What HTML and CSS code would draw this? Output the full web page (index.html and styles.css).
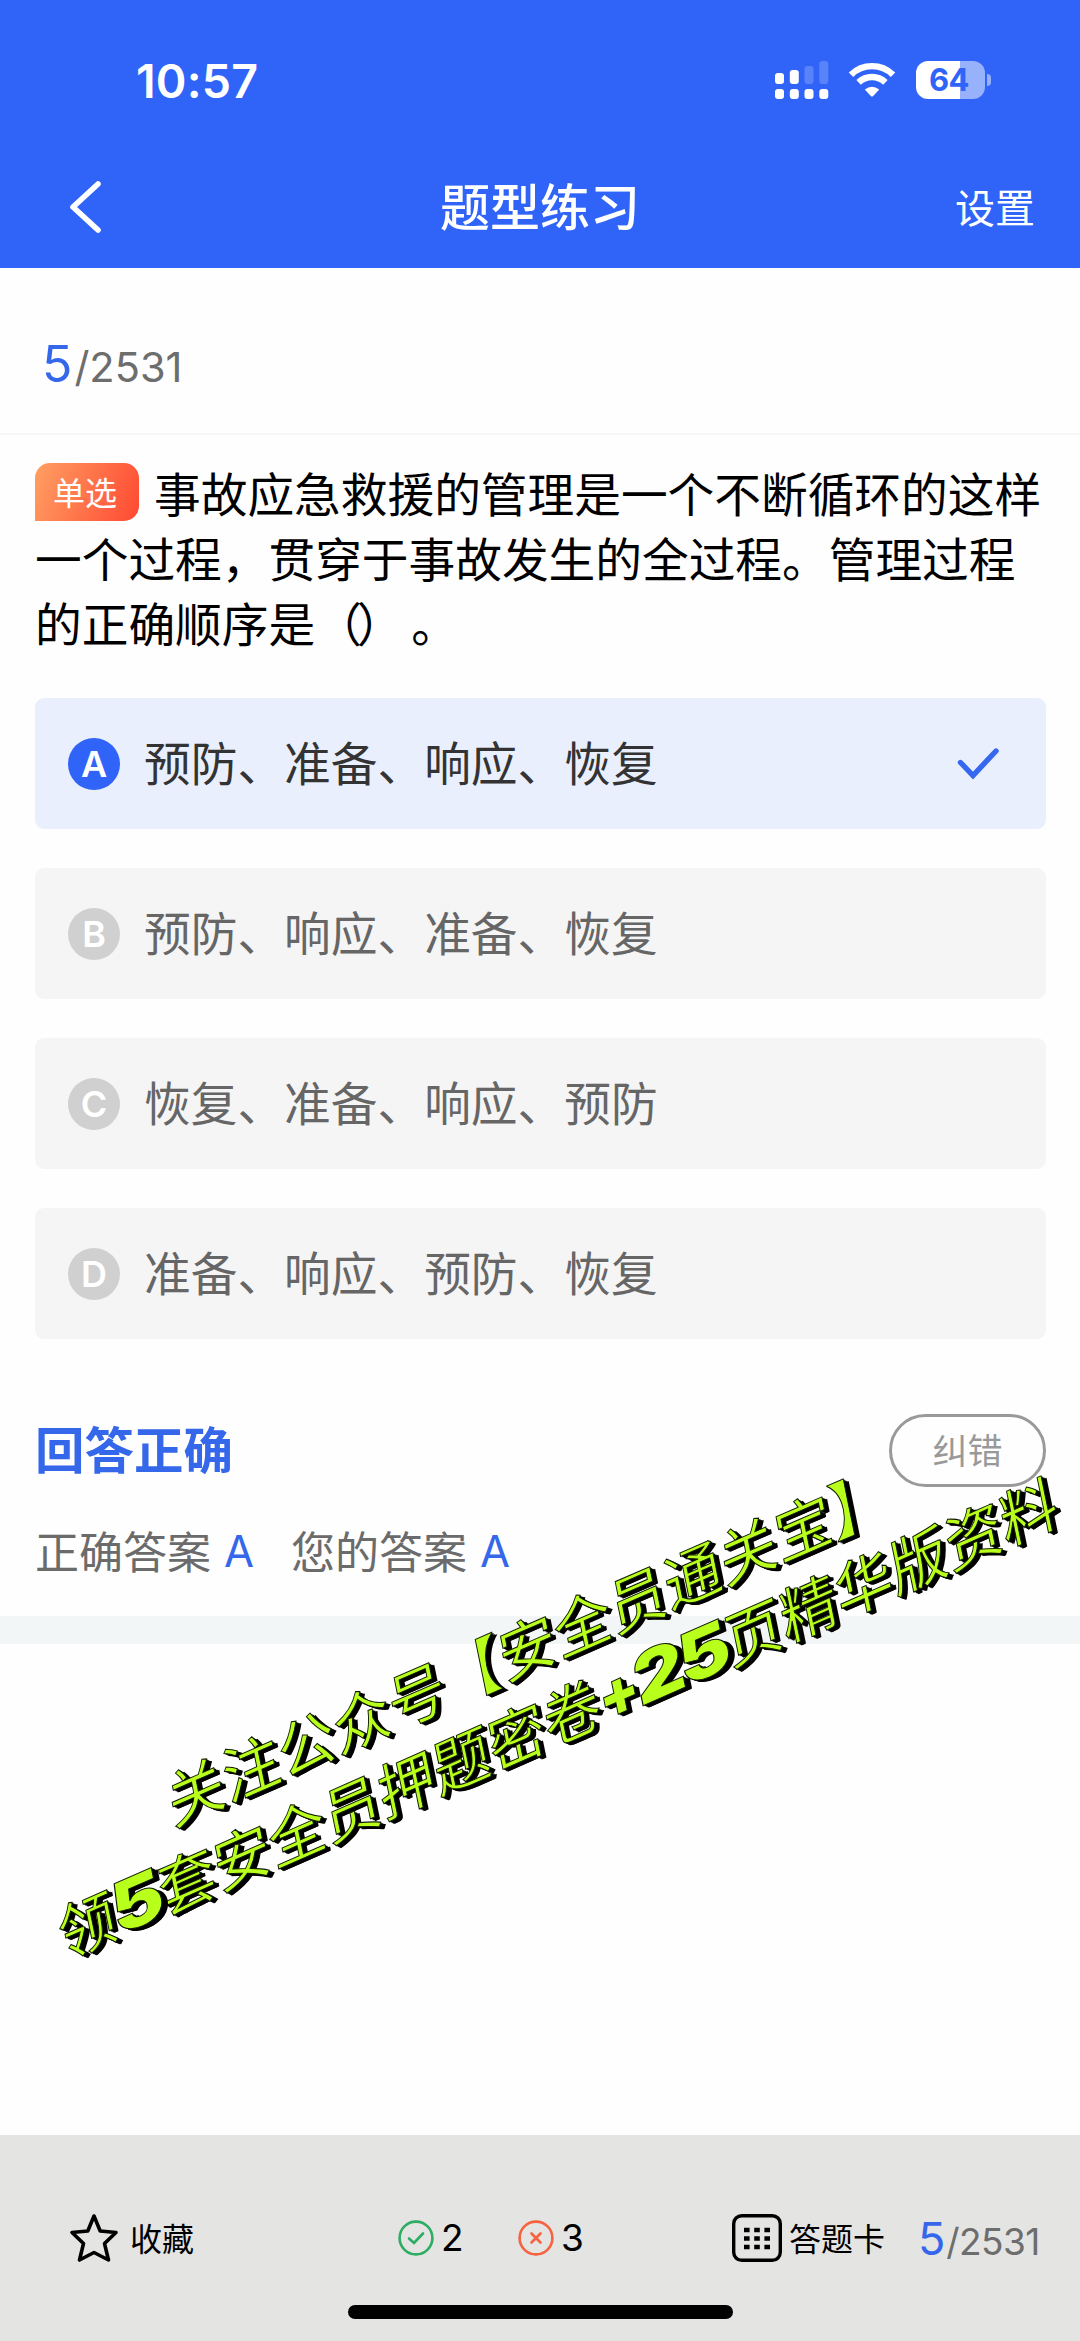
FILE: index.html
```html
<!DOCTYPE html>
<html lang="zh-CN">
<head>
<meta charset="utf-8">
<title>题型练习</title>
<link rel="stylesheet" href="styles.css">
</head>
<body>
<div class="screen">
  <header class="header">
    <div class="status">
      <span class="clock">10:57</span>
      <div class="status-icons">
        <svg class="signal" width="54" height="38" viewBox="0 0 54 38" fill="#fff">
          <rect x="0" y="12" width="9" height="11" rx="3"/><rect x="14.8" y="9" width="9" height="14" rx="3"/>
          <rect x="29.5" y="5" width="9" height="18" rx="3" opacity=".2"/><rect x="44.3" y="0" width="9" height="23" rx="3" opacity=".2"/>
          <rect x="0" y="28" width="9" height="10" rx="3"/><rect x="14.8" y="28" width="9" height="10" rx="3"/>
          <rect x="29.5" y="28" width="9" height="10" rx="3"/><rect x="44.3" y="28" width="9" height="10" rx="3"/>
        </svg>
        <svg class="wifi" width="48" height="36" viewBox="0 0 48 36">
          <g fill="none" stroke="#fff" stroke-width="6.4">
            <path d="M3 12.7A30 30 0 0 1 45 12.7"/><path d="M10.6 20.4A19.3 19.3 0 0 1 37.4 20.4"/>
          </g>
          <path d="M16.8 27.6Q24 22 31.2 27.6L25.2 34Q24 35 22.8 34Z" fill="#fff"/>
        </svg>
        <div class="battery"><span class="battery-level">64</span><i class="battery-tip"></i></div>
      </div>
    </div>
    <nav class="nav">
      <svg class="back" width="32" height="54" viewBox="0 0 32 54"><path d="M29 4L4 27L29 50" fill="none" stroke="#fff" stroke-width="5.600" stroke-linecap="round" stroke-linejoin="round"/></svg>
      <h1 class="title">题型练习</h1>
      <span class="settings">设置</span>
    </nav>
  </header>

  <div class="progress"><span class="counter"><b>5</b>/2531</span></div>

  <main class="content">
    <div class="question"><span class="tag">单选</span>事故应急救援的管理是一个不断循环的这样一个过程，贯穿于事故发生的全过程。管理过程的正确顺序是<span class="parens">（）</span>。</div>
    <div class="options">
      <div class="option selected"><span class="letter">A</span><span class="text">预防、准备、响应、恢复</span>
        <svg class="tick" width="46" height="34" viewBox="0 0 46 34"><path d="M4.500 15.500L17 28.500L40 4" fill="none" stroke="#3567ef" stroke-width="5.400" stroke-linecap="round" stroke-linejoin="miter"/></svg>
      </div>
      <div class="option"><span class="letter">B</span><span class="text">预防、响应、准备、恢复</span></div>
      <div class="option"><span class="letter">C</span><span class="text">恢复、准备、响应、预防</span></div>
      <div class="option"><span class="letter">D</span><span class="text">准备、响应、预防、恢复</span></div>
    </div>
    <div class="result">
      <span class="verdict">回答正确</span>
      <span class="report">纠错</span>
    </div>
    <div class="answers">
      <span>正确答案</span><b class="first">A</b><span class="yours">您的答案</span><b>A</b>
    </div>
  </main>
  <div class="divider"></div>

  <footer class="footer">
    <div class="toolbar">
      <div class="favorite">
        <svg width="50" height="50" viewBox="0 0 50 50"><path d="M25 3L31.200 18L47 19.500L35.500 30.500L39.500 47L25 39.500L10.500 47L14.500 30.500L3 19.500L18.800 18Z" fill="none" stroke="#000" stroke-width="3.600" stroke-linejoin="round"/></svg>
        <span>收藏</span>
      </div>
      <div class="score right">
        <svg width="36" height="36" viewBox="0 0 36 36" fill="none" stroke="#2fac63" stroke-width="2.600"><circle cx="18" cy="18" r="16.400"/><path d="M11 18.500L16 23L25 13.500" stroke-linecap="round"/></svg>
        <span>2</span>
      </div>
      <div class="score wrong">
        <svg width="36" height="36" viewBox="0 0 36 36" fill="none" stroke="#f7623f" stroke-width="2.600"><circle cx="18" cy="18" r="16.400"/><path d="M13.500 13.500L22.500 22.500M22.500 13.500L13.500 22.500" stroke-linecap="round"/></svg>
        <span>3</span>
      </div>
      <div class="sheet">
        <svg width="50" height="48" viewBox="0 0 50 48"><rect x="1.700" y="1.700" width="46.600" height="44.600" rx="8" fill="none" stroke="#000" stroke-width="3.400"/><path d="M12 16h26M12 24.500h26M12 33h26" stroke="#000" stroke-width="4.400" stroke-dasharray="5.600 4.600"/></svg>
        <span>答题卡</span>
      </div>
      <span class="counter small"><b>5</b>/2531</span>
    </div>
    <i class="home-bar"></i>
  </footer>

  <div class="promo promo-top">关注公众号【安全员通关宝】</div>
  <div class="promo promo-bottom">领<span class="num">5</span>套安全员押题密卷<span class="num plus">+</span><span class="num">2</span><span class="num">5</span>页精华版资料</div>
</div>
</body>
</html>
```
FILE: styles.css
```css
* { box-sizing: border-box; }
body { margin: 0; background: #fefefe; }
.screen {
  position: relative;
  display: flex;
  flex-direction: column;
  width: 1080px;
  height: 2341px;
  overflow: hidden;
  font-family: "Noto Sans CJK SC", sans-serif;
  text-spacing-trim: space-all;
  color: #000;
  background: #fefefe;
}
i, b { font-style: normal; font-weight: 400; }
svg { display: block; flex: none; }

.header { height: 268px; background: #3064f8; color: #fff; }
.status {
  display: flex;
  justify-content: space-between;
  align-items: center;
  height: 160px;
  padding: 0 89px 0 136px;
}
.clock { padding-top: 2px; font: 600 46.500px/60px Inter, sans-serif; letter-spacing: .2px; }
.status-icons { display: flex; align-items: center; }
.wifi { margin-left: 19px; }
.battery {
  position: relative;
  width: 69px;
  height: 38px;
  margin-left: 20px;
  margin-right: 6px;
  border-radius: 12px;
  background: linear-gradient(90deg, #fff 44px, #98b1fb 44px);
}
.battery-level {
  display: block;
  color: #3064f8;
  font: 700 31px/38px Inter, sans-serif;
  letter-spacing: -.5px;
  text-align: center;
  padding-right: 3px;
}
.battery-tip {
  position: absolute;
  left: 71px;
  top: 13px;
  width: 4px;
  height: 12px;
  border-radius: 0 4px 4px 0;
  background: #98b1fb;
}
.nav {
  display: grid;
  grid-template-columns: 1fr auto 1fr;
  align-items: center;
  height: 94px;
  padding: 0 45px 0 69px;
}
.title { margin: 0; padding: 0 24px 7px 0; font-size: 50px; line-height: 70px; font-weight: 500; }
.settings { justify-self: end; padding-bottom: 2px; font-size: 40px; line-height: 56px; }

.progress {
  display: flex;
  align-items: flex-end;
  height: 167px;
  padding: 0 42px 36px;
  border-bottom: 2px solid #f6f6f6;
}
.counter { font: 400 41.500px/60px Inter, sans-serif; color: #6d6d6d; letter-spacing: 0; white-space: nowrap; }
.counter b { font-size: 50px; letter-spacing: 2px; color: #3567ea; }

.content { padding: 24px 34px 0 35px; height: 1181px; }
.question { margin: 0; font-size: 46.700px; line-height: 65px; height: 239px; }
.parens { display: inline-block; width: 96px; letter-spacing: -5px; }
.tag {
  float: left;
  width: 104px;
  height: 58px;
  margin: 4px 15px 0 0;
  padding-right: 4px;
  border-radius: 15px 15px 15px 0;
  background: linear-gradient(110deg, #ff9f63, #ff4932);
  color: #fff;
  font-size: 32px;
  line-height: 56px;
  text-align: center;
}
.options { display: flex; flex-direction: column; gap: 39px; }
.option {
  display: flex;
  align-items: center;
  height: 131px;
  padding: 0 44px 0 33px;
  border-radius: 9px;
  background: #f5f5f5;
  color: #666;
  font-size: 46.700px;
  line-height: 66px;
}
.text { padding-bottom: 5px; }
.option.selected { background: #eaeffe; color: #333; }
.letter {
  width: 52px;
  height: 52px;
  margin-right: 24px;
  border-radius: 50%;
  background: #d0d0d0;
  color: #fff;
  font: 600 36px/53px Inter, sans-serif;
  text-align: center;
}
.selected .letter { background: #3064f8; }
.tick { margin-left: auto; }
.result { display: flex; justify-content: space-between; align-items: center; height: 73px; margin-top: 75px; }
.verdict { padding-bottom: 6px; color: #3567ea; font-size: 49.500px; font-weight: 700; line-height: 70px; }
.report {
  width: 157px;
  height: 73px;
  border: 3px solid #999;
  border-radius: 37px;
  color: #999;
  font-size: 35px;
  line-height: 63px;
  text-align: center;
}
.answers { display: flex; align-items: center; margin-top: 29px; color: #6b6b6b; font-size: 44px; line-height: 64px; }
.answers b { margin-left: 13px; padding-top: 3px; color: #3567ea; font: 400 43.500px/64px Inter, sans-serif; }
.answers .yours { margin-left: 37px; }
.divider { height: 28px; background: #f3f6f7; }

.footer { display: flex; flex-direction: column; align-items: center; height: 206px; margin-top: auto; background: #e4e4e3; }
.toolbar { display: flex; align-items: center; width: 100%; height: 100px; margin-top: 53px; padding-left: 69px; font-size: 32px; line-height: 46px; }
.favorite, .score, .sheet { display: flex; align-items: center; }
.favorite { width: 329px; }
.favorite span { margin-left: 11px; padding-bottom: 3px; }
.score { width: 120px; font: 400 37px/44px Inter, sans-serif; }
.score span { margin-left: 7px; }
.wrong { width: 214px; }
.sheet { width: 186px; }
.sheet span { margin-left: 7px; padding-bottom: 3px; }
.counter.small { padding-top: 4px; font-size: 37px; letter-spacing: -.6px; }
.counter.small b { font-size: 45px; letter-spacing: 1px; }
.home-bar { width: 385px; height: 14px; margin: 17px 0 0 1px; border-radius: 7px; background: #000; }

/* Slanted promotional lettering laid over the page */
.promo {
  position: absolute;
  height: 80px;
  white-space: nowrap;
  font-size: 60px;
  line-height: 80px;
  text-align: center;
  color: #b9ff1c;
  -webkit-text-stroke: 1px #101800;
  text-shadow: 1px 1px #000, 2px 2px #000, 3px 3px #000, 4px 4px #000, 5px 4px #000;
}
.promo-top { left: 135px; top: 1604px; width: 783px; letter-spacing: .2px; transform: rotate(-23.550deg) skewX(-12deg); }
.promo-bottom { left: 13px; top: 1675px; width: 1088px; transform: rotate(-23.700deg) skewX(-12deg); }
.num { display: inline-block; width: 49px; font: 900 68px/80px Inter, sans-serif; transform: scaleX(1.220); text-indent: 1px; }
.num.plus { width: 41px; font-size: 62px; transform: none; text-indent: 0; }
```
